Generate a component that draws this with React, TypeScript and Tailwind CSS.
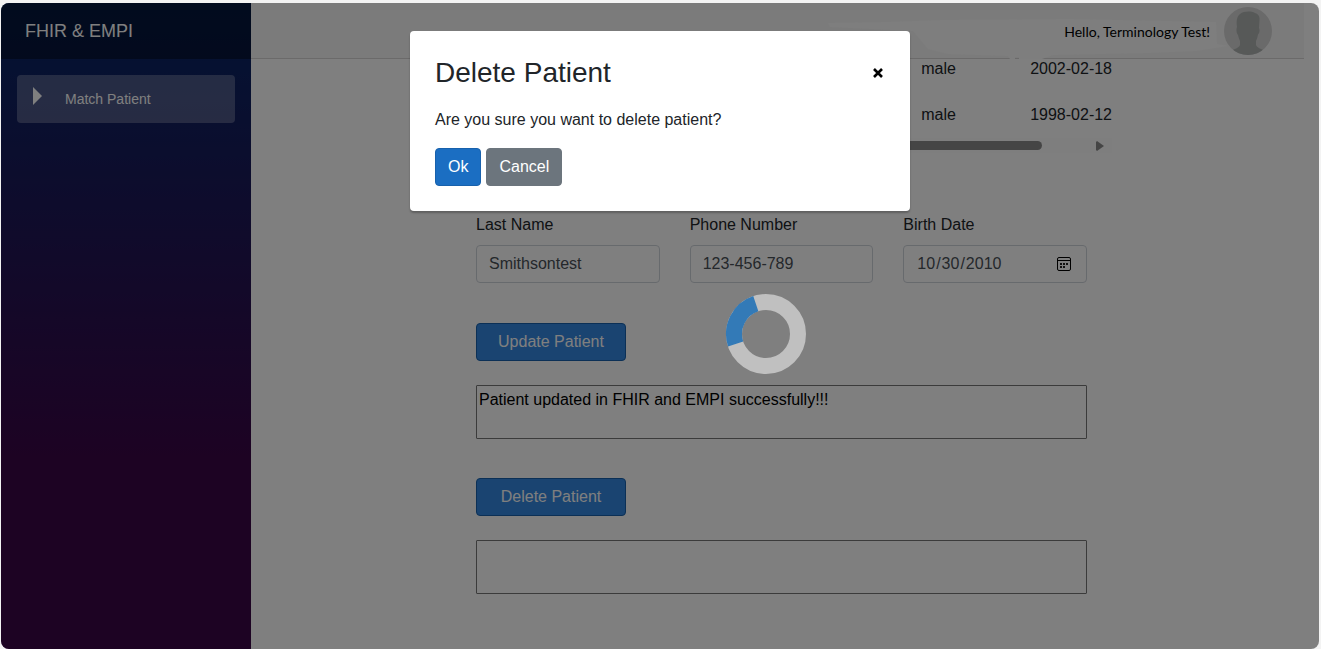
import React from "react";

const patients = [
  { gender: "male", birthDate: "2002-02-18" },
  { gender: "male", birthDate: "1998-02-12" },
];

const fieldClass =
  "block h-[38px] w-full rounded border border-[#ced4da] bg-white px-3 text-base text-[#495057]";
const actionClass =
  "block h-[38px] w-[150px] rounded border border-[#1861ac] bg-[#3488e2] text-base text-white";
const resultClass =
  "block h-[54px] w-full resize-none rounded-[1px] border border-[#767676] bg-white p-[2px] text-base leading-6 text-black";

function Sidebar() {
  return (
    <aside className="w-[250px] shrink-0 bg-[linear-gradient(180deg,rgb(5,39,103)_0%,#3a0647_70%)]">
      <div className="flex h-14 items-center bg-black/40 px-6">
        <a href="#home" className="text-lg text-white">
          FHIR &amp; EMPI
        </a>
      </div>
      <nav className="p-4">
        <a
          href="#match"
          className="flex h-12 items-center rounded bg-white/25 px-4 text-sm text-white"
        >
          <span className="w-8">
            <svg width="9" height="18" viewBox="0 0 9 18" className="mb-[6px]" aria-hidden="true">
              <path d="M0 0L9 9L0 18Z" fill="#fff" />
            </svg>
          </span>
          Match Patient
        </a>
      </nav>
    </aside>
  );
}

function Avatar() {
  return (
    <svg width="48" height="48" viewBox="0 0 48 48" aria-label="User avatar">
      <clipPath id="avatar">
        <circle cx="24" cy="24" r="24" />
      </clipPath>
      <g clipPath="url(#avatar)">
        <rect width="48" height="48" fill="#d4d4d4" />
        <path
          d="M13 20C12 14 13 9 16 7C20 4 27 4 31 6C34 7 36 9 35.500 13L35 21C36 23 35.500 26 34 27.500C33.500 30 33 32 32 34L32 38C33 41 37 41.500 40 43.500V50H8V43.500C11 41.500 15 41 16 38L16 34C15 32 14.500 30 14 28C12.500 26 12 23 13 20Z"
          fill="#aeb2b1"
        />
      </g>
    </svg>
  );
}

function Header() {
  return (
    <header className="relative z-10 mr-[15px] flex h-14 items-center justify-end gap-[14px] border-b border-[#d6d5d5] bg-[#f7f7f7] pr-8">
      <svg
        className="absolute -bottom-px right-[74px]"
        width="402"
        height="40"
        viewBox="0 0 402 40"
        aria-hidden="true"
      >
        <path
          d="M0 4L60 3L115 1L240 0L388 3L389 25L400 27L368 32L320 34L225 36L214 40H191V38H187V40H182L180 37L120 35L100 30L85 12L2 8Z"
          fill="#fcfcfc"
        />
      </svg>
      <span className="relative pt-[3px] font-[Lato,sans-serif] text-[14px] leading-5 text-black">
        Hello, Terminology Test!
      </span>
      <Avatar />
    </header>
  );
}

function PatientTable() {
  return (
    <div>
      <table className="ml-auto text-base leading-6 text-[#212529]">
        <tbody>
          {patients.map((p) => (
            <tr key={p.birthDate}>
              <td className="w-[109px] py-[11px]">{p.gender}</td>
              <td className="w-20 py-[11px] whitespace-nowrap">{p.birthDate}</td>
            </tr>
          ))}
        </tbody>
      </table>
      <div className="flex h-[15px] items-center bg-[#fcfcfc] pr-2">
        <div className="ml-4 h-[9px] flex-1 rounded-full bg-[#8b8b8b]" />
        <svg className="ml-[54px]" width="8" height="10" viewBox="0 0 8 10" aria-hidden="true">
          <path d="M0 1L1 0L8 5L1 10L0 9Z" fill="#8b8b8b" />
        </svg>
      </div>
    </div>
  );
}

function CalendarIcon() {
  return (
    <svg width="14" height="14" viewBox="0 0 14 14" className="absolute right-4 top-3" aria-hidden="true">
      <rect x=".5" y=".5" width="13" height="13" rx="1.5" fill="none" stroke="#000" />
      <path d="M1 3.5H13" stroke="#000" />
      <path d="M3 6h2v2H3zM6 6h2v2H6zM9 6h2v2H9zM3 9h2v2H3zM6 9h2v2H6z" fill="#222" />
    </svg>
  );
}

function PatientForm() {
  return (
    <form className="mt-[60px] pl-[33px] pr-[25px]" onSubmit={(e) => e.preventDefault()}>
      <div className="grid grid-cols-3 gap-[30px]">
        <div>
          <label htmlFor="last" className="mb-2 block">Last Name</label>
          <input id="last" className={fieldClass} defaultValue="Smithsontest" />
        </div>
        <div>
          <label htmlFor="phone" className="mb-2 block">Phone Number</label>
          <input id="phone" className={fieldClass} defaultValue="123-456-789" />
        </div>
        <div>
          <label htmlFor="birth" className="mb-2 block">Birth Date</label>
          <div className="relative">
            <input
              id="birth"
              type="date"
              className={`${fieldClass} [&::-webkit-calendar-picker-indicator]:opacity-0`}
              defaultValue="2010-10-30"
            />
            <CalendarIcon />
          </div>
        </div>
      </div>
      <button type="button" className={`${actionClass} mt-10`}>Update Patient</button>
      <textarea
        aria-label="Update result"
        className={`${resultClass} mt-6`}
        defaultValue="Patient updated in FHIR and EMPI successfully!!!"
      />
      <button type="button" className={`${actionClass} mt-[39px]`}>Delete Patient</button>
      <textarea aria-label="Delete result" className={`${resultClass} mt-6`} />
    </form>
  );
}

function Spinner() {
  return (
    <svg
      className="absolute left-[58%] top-[51%] -ml-10 -mt-[39px]"
      width="82"
      height="82"
      viewBox="-41 -41 82 82"
      role="status"
      aria-label="Loading"
    >
      <circle r="32" fill="none" stroke="#c0c0c0" strokeWidth="16" />
      <path d="M-30.4 10A32 32 0 0 1 -10.2 -30.3" fill="none" stroke="#337ab7" strokeWidth="16" />
    </svg>
  );
}

function DeleteDialog() {
  return (
    <div
      role="dialog"
      aria-labelledby="dialog-title"
      className="absolute inset-x-0 top-7 mx-auto w-full max-w-[500px] rounded bg-white p-[25px] shadow-[0_2px_2px_rgba(0,0,0,0.25)]"
    >
      <div className="flex h-[34px] items-center justify-between">
        <h3 id="dialog-title" className="text-[28px] leading-[34px]">Delete Patient</h3>
        <button type="button" aria-label="Close" className="p-[2px]">
          <svg width="10" height="10" viewBox="0 0 10 10" aria-hidden="true">
            <path d="M1 1L9 9M9 1L1 9" stroke="#000" strokeWidth="2.6" />
          </svg>
        </button>
      </div>
      <p className="mb-4 mt-[18px] leading-6">Are you sure you want to delete patient?</p>
      <div className="flex gap-[5px]">
        <button type="button" className="h-[38px] rounded border border-[#1861ac] bg-[#1b6ec2] px-3 text-white">
          Ok
        </button>
        <button type="button" className="h-[38px] rounded border border-[#6c757d] bg-[#6c757d] px-3 text-white">
          Cancel
        </button>
      </div>
    </div>
  );
}

export default function App() {
  return (
    <div className="flex min-h-screen bg-[#f3f3f3] pl-px pr-[2px] pt-[3px] font-['Liberation_Sans',Arial,sans-serif] text-base text-[#212529]">
      <div className="relative flex flex-1 overflow-hidden rounded-lg bg-white">
        <Sidebar />
        <div className="min-w-0 flex-1">
          <Header />
          <main className="mr-[15px] pb-8">
            <div className="mx-auto -mt-[13px] max-w-[669px]">
              <PatientTable />
              <PatientForm />
            </div>
          </main>
        </div>
        <div className="absolute inset-0 z-20 bg-black/50">
          <Spinner />
          <DeleteDialog />
        </div>
      </div>
    </div>
  );
}
